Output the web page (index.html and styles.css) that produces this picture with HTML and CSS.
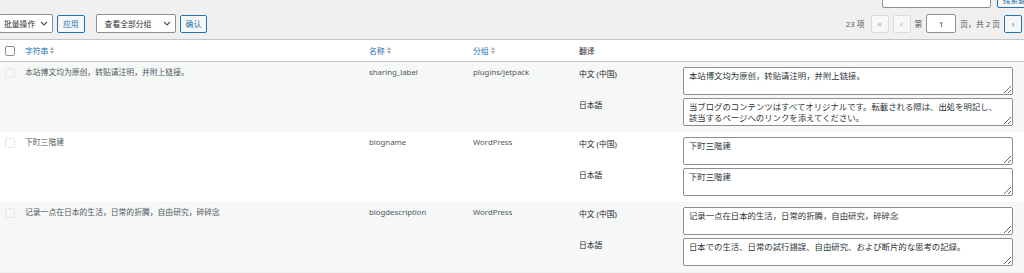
FILE: index.html
```html
<!DOCTYPE html>
<html lang="zh-CN">
<head>
    <meta charset="UTF-8">
    <meta name="viewport" content="width=device-width, initial-scale=1.0">
    <title>字符串翻译</title>
    <link rel="stylesheet" href="styles.css">
</head>
<body>
    <div class="search-row">
        <input type="text" class="search-input">
        <button class="btn">搜索翻译</button>
    </div>

    <div class="tablenav">
        <div class="actions">
            <select class="select bulk"><option>批量操作</option></select>
            <button class="btn">应用</button>
            <select class="select group"><option>查看全部分组</option></select>
            <button class="btn">确认</button>
        </div>
        <div class="pagination">
            <span class="count">23 项</span>
            <span class="page-btn disabled">«</span>
            <span class="page-btn disabled">‹</span>
            <span>第</span>
            <input type="text" class="page-input" value="1">
            <span>页，共 2 页</span>
            <span class="page-btn">›</span>
        </div>
    </div>

    <table class="strings">
        <thead>
            <tr>
                <th class="col-cb"><span class="cb"></span></th>
                <th class="col-string"><a class="sort">字符串 <i class="arrows"></i></a></th>
                <th class="col-name"><a class="sort">名称 <i class="arrows"></i></a></th>
                <th class="col-group"><a class="sort">分组 <i class="arrows"></i></a></th>
                <th class="col-trans">翻译</th>
            </tr>
        </thead>
        <tbody>
            <tr class="alt">
                <td class="col-cb"><span class="cb faded"></span></td>
                <td>本站博文均为原创，转贴请注明，并附上链接。</td>
                <td>sharing_label</td>
                <td>plugins/jetpack</td>
                <td>
                    <div class="trans">
                        <label>中文 (中国)</label>
                        <textarea>本站博文均为原创，转贴请注明，并附上链接。</textarea>
                        <label>日本語</label>
                        <textarea>当ブログのコンテンツはすべてオリジナルです。転載される際は、出処を明記し、該当するページへのリンクを添えてください。</textarea>
                    </div>
                </td>
            </tr>
            <tr>
                <td class="col-cb"><span class="cb faded"></span></td>
                <td>下町三階建</td>
                <td>blogname</td>
                <td>WordPress</td>
                <td>
                    <div class="trans">
                        <label>中文 (中国)</label>
                        <textarea>下町三階建</textarea>
                        <label>日本語</label>
                        <textarea>下町三階建</textarea>
                    </div>
                </td>
            </tr>
            <tr class="alt">
                <td class="col-cb"><span class="cb faded"></span></td>
                <td>记录一点在日本的生活，日常的折腾，自由研究，碎碎念</td>
                <td>blogdescription</td>
                <td>WordPress</td>
                <td>
                    <div class="trans">
                        <label>中文 (中国)</label>
                        <textarea>记录一点在日本的生活，日常的折腾，自由研究，碎碎念</textarea>
                        <label>日本語</label>
                        <textarea>日本での生活、日常の試行錯誤、自由研究、および断片的な思考の記録。</textarea>
                    </div>
                </td>
            </tr>
        </tbody>
    </table>
</body>
</html>
```

FILE: styles.css
```css
body {
    margin: 0;
    background-color: #f0f0f1;
    font-family: "Noto Sans", "Noto Sans CJK SC", sans-serif;
    font-size: 7.8px;
    color: #50575e;
    overflow: hidden;
}
.search-row {
    display: flex;
    justify-content: flex-end;
    gap: 6px;
    margin-top: -10px;
    margin-right: -16px;
    height: 18px;
}
.search-input {
    width: 109px;
    height: 18px;
    box-sizing: border-box;
    border: 1px solid #8c8f94;
    border-radius: 2px;
    background: white;
}
.btn {
    height: 18px;
    box-sizing: border-box;
    padding: 0 5px;
    border: 1px solid #2271b1;
    border-radius: 2px;
    background: #f6f7f7;
    color: #2271b1;
    font-family: inherit;
    font-size: 7.8px;
}
.tablenav {
    display: flex;
    justify-content: space-between;
    align-items: center;
    height: 19px;
    margin-top: 6px;
    padding-bottom: 6px;
}
.actions {
    display: flex;
    align-items: center;
    gap: 4px;
    margin-left: -1px;
}
.select {
    appearance: none;
    height: 19px;
    box-sizing: border-box;
    border: 1px solid #8c8f94;
    border-radius: 2px;
    background: white url("data:image/svg+xml,%3Csvg xmlns='http://www.w3.org/2000/svg' width='8' height='5' viewBox='0 0 8 5'%3E%3Cpath d='M1 1l3 3 3-3' fill='none' stroke='%2350575e' stroke-width='1.2'/%3E%3C/svg%3E") no-repeat right 4px center;
    color: #2c3338;
    font-family: inherit;
    font-size: 7.8px;
    padding: 0 12px 0 4px;
}
.bulk { width: 54px; }
.group { width: 80px; margin-left: 7px; padding-left: 8px; }
.pagination {
    display: flex;
    align-items: center;
    gap: 4px;
    margin-right: 2px;
}
.count { margin-right: 2px; }
.page-btn {
    width: 18px;
    height: 18px;
    box-sizing: border-box;
    display: flex;
    align-items: center;
    justify-content: center;
    border: 1px solid #2271b1;
    border-radius: 2px;
    background: #f6f7f7;
    color: #2271b1;
    font-size: 8px;
}
.page-btn.disabled {
    border-color: #dcdcde;
    color: #a7aaad;
}
.page-input {
    width: 30px;
    height: 19px;
    box-sizing: border-box;
    border: 1px solid #8c8f94;
    border-radius: 2px;
    text-align: center;
    font-family: inherit;
    font-size: 7.8px;
    color: #2c3338;
}
.strings {
    width: 100%;
    border-collapse: collapse;
    background: white;
    border-top: 1px solid #c3c4c7;
    table-layout: fixed;
}
.strings th {
    height: 21px;
    padding: 0 4px;
    text-align: left;
    font-weight: normal;
    color: #1d2327;
    border-bottom: 1px solid #c3c4c7;
}
.strings td {
    padding: 6px 4px 0;
    vertical-align: top;
    height: 70px;
    box-sizing: border-box;
    line-height: 9px;
}
.strings tr.alt td { background: #f6f7f7; }
.col-cb { width: 13px; }
.strings .col-cb { padding-left: 5px; padding-right: 3px; }
.col-string { width: 336px; }
.col-name { width: 96px; }
.col-group { width: 98px; }
.sort {
    color: #2271b1;
    display: inline-flex;
    align-items: center;
    gap: 2px;
}
.arrows {
    display: inline-flex;
    flex-direction: column;
    gap: 1px;
}
.arrows::before, .arrows::after {
    content: "";
    border-left: 2px solid transparent;
    border-right: 2px solid transparent;
}
.arrows::before { border-bottom: 3px solid #a7aaad; }
.arrows::after { border-top: 3px solid #a7aaad; }
.cb {
    display: block;
    width: 10px;
    height: 10px;
    box-sizing: border-box;
    border: 1px solid #8c8f94;
    border-radius: 2px;
    background: white;
}
.cb.faded {
    border-color: #e6e7e8;
    background: transparent;
}
.trans {
    display: grid;
    grid-template-columns: 104px 330px;
    row-gap: 3px;
    margin-top: -1px;
}
.trans label {
    color: #1d2327;
    padding-top: 3px;
}
.trans textarea {
    height: 28px;
    box-sizing: border-box;
    border: 1px solid #8c8f94;
    border-radius: 2px;
    padding: 2px 10px 2px 5px;
    font-family: "Noto Sans CJK SC", sans-serif;
    font-size: 8.4px;
    line-height: 11px;
    color: #2c3338;
    background: white;
    resize: vertical;
    overflow: hidden;
}
```
